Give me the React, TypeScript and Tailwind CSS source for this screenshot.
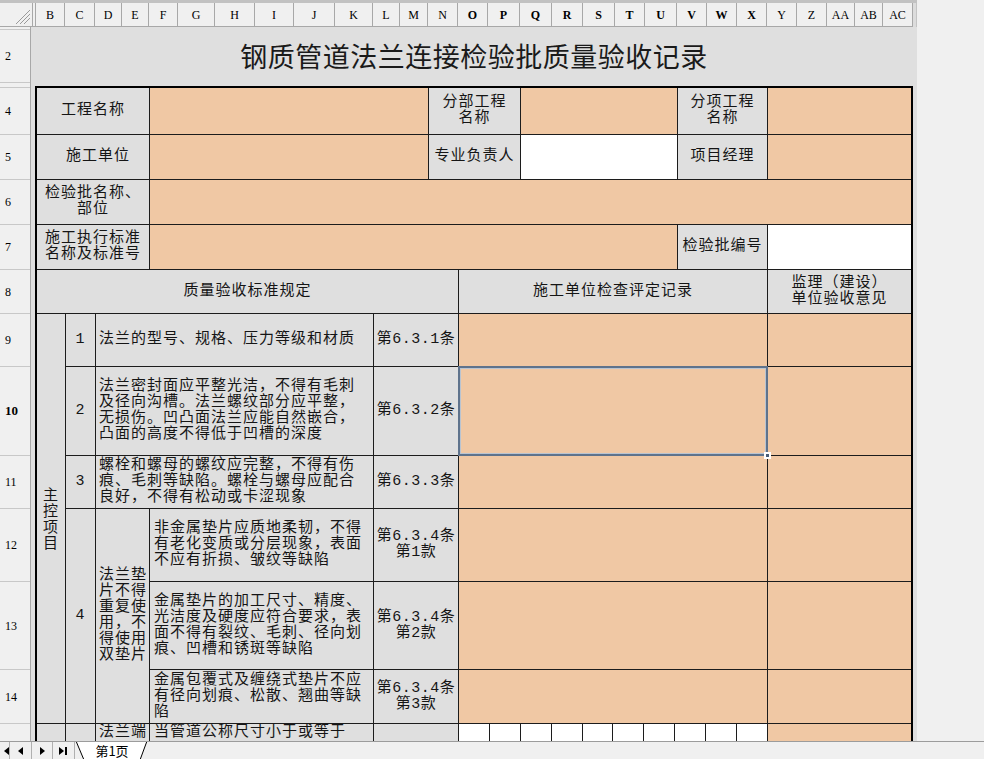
import React from 'react';

const colHeads: { name: string; w: string; weight: string }[] = [
  { name: 'B', w: 'w-[29px]', weight: 'font-normal' },
  { name: 'C', w: 'w-[30px]', weight: 'font-normal' },
  { name: 'D', w: 'w-[27px]', weight: 'font-normal' },
  { name: 'E', w: 'w-[27px]', weight: 'font-normal' },
  { name: 'F', w: 'w-[29px]', weight: 'font-normal' },
  { name: 'G', w: 'w-[37px]', weight: 'font-normal' },
  { name: 'H', w: 'w-[40px]', weight: 'font-normal' },
  { name: 'I', w: 'w-[39px]', weight: 'font-normal' },
  { name: 'J', w: 'w-[41px]', weight: 'font-normal' },
  { name: 'K', w: 'w-[38px]', weight: 'font-normal' },
  { name: 'L', w: 'w-[27px]', weight: 'font-normal' },
  { name: 'M', w: 'w-[28px]', weight: 'font-normal' },
  { name: 'N', w: 'w-[30px]', weight: 'font-normal' },
  { name: 'O', w: 'w-[30px]', weight: 'font-bold' },
  { name: 'P', w: 'w-[32px]', weight: 'font-bold' },
  { name: 'Q', w: 'w-[32px]', weight: 'font-bold' },
  { name: 'R', w: 'w-[31px]', weight: 'font-bold' },
  { name: 'S', w: 'w-[32px]', weight: 'font-bold' },
  { name: 'T', w: 'w-[30px]', weight: 'font-bold' },
  { name: 'U', w: 'w-[32px]', weight: 'font-bold' },
  { name: 'V', w: 'w-[30px]', weight: 'font-bold' },
  { name: 'W', w: 'w-[30px]', weight: 'font-bold' },
  { name: 'X', w: 'w-[30px]', weight: 'font-bold' },
  { name: 'Y', w: 'w-[30px]', weight: 'font-normal' },
  { name: 'Z', w: 'w-[30px]', weight: 'font-normal' },
  { name: 'AA', w: 'w-[28px]', weight: 'font-normal' },
  { name: 'AB', w: 'w-[28px]', weight: 'font-normal' },
  { name: 'AC', w: 'w-[30px]', weight: 'font-normal' },
];

const rowHeads: { n: string; h: string }[] = [
  { n: '', h: 'h-[3px]' },
  { n: '2', h: 'h-[53px]' },
  { n: '', h: 'h-[5px]' },
  { n: '4', h: 'h-[47px]' },
  { n: '5', h: 'h-[45px]' },
  { n: '6', h: 'h-[45px]' },
  { n: '7', h: 'h-[45px]' },
  { n: '8', h: 'h-[44px]' },
  { n: '9', h: 'h-[53px]' },
  { n: '10', h: 'h-[89px]' },
  { n: '11', h: 'h-[53px]' },
  { n: '12', h: 'h-[73px]' },
  { n: '13', h: 'h-[88px]' },
  { n: '14', h: 'h-[54px]' },
  { n: '', h: 'h-[46px]' },
];

const GRAY = 'bg-[#dfdfdf]';
const ORANGE = 'bg-[#f0c8a4]';
const WHITE = 'bg-white';

function Cell({ pos, bg = GRAY, left = false, top = false, children, extra = '' }: {
  pos: string;
  bg?: string;
  left?: boolean;
  top?: boolean;
  children?: React.ReactNode;
  extra?: string;
}) {
  return (
    <div
      className={`${pos} ${bg} flex overflow-hidden whitespace-pre ${top ? 'items-start pt-[1px]' : 'items-center'} ${
        left ? 'justify-start text-left pl-[3px]' : 'justify-center text-center'
      } ${extra}`}
    >
      {children}
    </div>
  );
}

function ColumnHeader() {
  return (
    <div className="flex h-[24px] shrink-0 bg-[#f0f0f0] font-['Liberation_Serif',serif] text-[12px] text-black">
      <div className="relative w-[33px] border-r border-b border-[#a8a8a8]">
        <svg className="absolute right-[2px] bottom-[2px]" width="14" height="14" viewBox="0 0 14 14">
          <line x1="14" y1="0" x2="0" y2="14" stroke="#9a9a9a" />
          <line x1="14" y1="4" x2="4" y2="14" stroke="#9a9a9a" />
          <line x1="14" y1="8" x2="8" y2="14" stroke="#9a9a9a" />
        </svg>
      </div>
      <div className="w-[3px] border-r border-b border-[#a8a8a8]" />
      {colHeads.map((c) => (
        <div key={c.name} className={`${c.w} ${c.weight} flex items-center justify-center border-r border-b border-[#a8a8a8]`}>
          {c.name}
        </div>
      ))}
      <div className="w-[4px] bg-[#dcdcdc] border-r border-[#c4c4c4]" />
    </div>
  );
}

function RowHeader() {
  return (
    <div className="w-[31px] shrink-0 bg-[#f0f0f0] border-r border-[#a8a8a8] font-['Liberation_Serif',serif] text-[12px] text-black">
      {rowHeads.map((r, i) => (
        <div
          key={i}
          className={`${r.h} flex items-center pl-[5px] border-b border-[#c8c8c8] ${r.n === '10' ? 'font-bold text-[13px]' : ''}`}
        >
          {r.n}
        </div>
      ))}
    </div>
  );
}

function Table() {
  return (
    <div className="w-[878px] border-2 border-black bg-[#1c1c1c] grid gap-px grid-cols-[28px_29px_53px_223px_54px_29px_61px_156px_89px_143px] grid-rows-[46px_44px_44px_44px_43px_52px_88px_52px_72px_87px_53px_46px] text-[15px] leading-[16px] tracking-[1px] text-[#151515]">
      {/* row 4 */}
      <Cell pos="col-start-1 col-end-4 row-start-1">工程名称</Cell>
      <Cell pos="col-start-4 col-end-6 row-start-1" bg={ORANGE} />
      <Cell pos="col-start-6 col-end-8 row-start-1">{'分部工程\n名称'}</Cell>
      <Cell pos="col-start-8 col-end-9 row-start-1" bg={ORANGE} />
      <Cell pos="col-start-9 col-end-10 row-start-1">{'分项工程\n名称'}</Cell>
      <Cell pos="col-start-10 col-end-11 row-start-1" bg={ORANGE} />

      {/* row 5 */}
      <Cell pos="col-start-1 col-end-4 row-start-2" extra="pl-[10px]">施工单位</Cell>
      <Cell pos="col-start-4 col-end-6 row-start-2" bg={ORANGE} />
      <Cell pos="col-start-6 col-end-8 row-start-2">专业负责人</Cell>
      <Cell pos="col-start-8 col-end-9 row-start-2" bg={WHITE} />
      <Cell pos="col-start-9 col-end-10 row-start-2">项目经理</Cell>
      <Cell pos="col-start-10 col-end-11 row-start-2" bg={ORANGE} />

      {/* row 6 */}
      <Cell pos="col-start-1 col-end-4 row-start-3">{'检验批名称、\n部位'}</Cell>
      <Cell pos="col-start-4 col-end-11 row-start-3" bg={ORANGE} />

      {/* row 7 */}
      <Cell pos="col-start-1 col-end-4 row-start-4">{'施工执行标准\n名称及标准号'}</Cell>
      <Cell pos="col-start-4 col-end-9 row-start-4" bg={ORANGE} />
      <Cell pos="col-start-9 col-end-10 row-start-4">检验批编号</Cell>
      <Cell pos="col-start-10 col-end-11 row-start-4" bg={WHITE} />

      {/* row 8 */}
      <Cell pos="col-start-1 col-end-7 row-start-5">质量验收标准规定</Cell>
      <Cell pos="col-start-7 col-end-10 row-start-5">施工单位检查评定记录</Cell>
      <Cell pos="col-start-10 col-end-11 row-start-5">{'监理（建设）\n单位验收意见'}</Cell>

      {/* 主控项目 */}
      <Cell pos="col-start-1 col-end-2 row-start-6 row-end-12" extra="pt-[4px]">{'主\n控\n项\n目'}</Cell>

      {/* row 9 */}
      <Cell pos="col-start-2 col-end-3 row-start-6">1</Cell>
      <Cell pos="col-start-3 col-end-5 row-start-6" left>法兰的型号、规格、压力等级和材质</Cell>
      <Cell pos="col-start-5 col-end-7 row-start-6" extra="tracking-[0.5px]">第6.3.1条</Cell>
      <Cell pos="col-start-7 col-end-10 row-start-6" bg={ORANGE} />
      <Cell pos="col-start-10 col-end-11 row-start-6" bg={ORANGE} />

      {/* row 10 */}
      <Cell pos="col-start-2 col-end-3 row-start-7">2</Cell>
      <Cell pos="col-start-3 col-end-5 row-start-7" left>
        {'法兰密封面应平整光洁，不得有毛刺\n及径向沟槽。法兰螺纹部分应平整，\n无损伤。凹凸面法兰应能自然嵌合，\n凸面的高度不得低于凹槽的深度'}
      </Cell>
      <Cell pos="col-start-5 col-end-7 row-start-7" extra="tracking-[0.5px]">第6.3.2条</Cell>
      <div className={`col-start-7 col-end-10 row-start-7 ${ORANGE} relative`}>
        <div className="absolute -inset-px border-2 border-[#5f738c]" />
        <div className="absolute inset-[1px] border border-[#b9c4d1]" />
        <div className="absolute -right-[4px] -bottom-[4px] w-[7px] h-[7px] bg-[#4a5d75] border-2 border-white" />
      </div>
      <Cell pos="col-start-10 col-end-11 row-start-7" bg={ORANGE} />

      {/* row 11 */}
      <Cell pos="col-start-2 col-end-3 row-start-8">3</Cell>
      <Cell pos="col-start-3 col-end-5 row-start-8" left>
        {'螺栓和螺母的螺纹应完整，不得有伤\n痕、毛刺等缺陷。螺栓与螺母应配合\n良好，不得有松动或卡涩现象'}
      </Cell>
      <Cell pos="col-start-5 col-end-7 row-start-8" extra="tracking-[0.5px]">第6.3.3条</Cell>
      <Cell pos="col-start-7 col-end-10 row-start-8" bg={ORANGE} />
      <Cell pos="col-start-10 col-end-11 row-start-8" bg={ORANGE} />

      {/* rows 12-14 */}
      <Cell pos="col-start-2 col-end-3 row-start-9 row-end-12">4</Cell>
      <Cell pos="col-start-3 col-end-4 row-start-9 row-end-12" left>
        {'法兰垫\n片不得\n重复使\n用，不\n得使用\n双垫片'}
      </Cell>

      <Cell pos="col-start-4 col-end-5 row-start-9" left extra="pl-[4px]">
        {'非金属垫片应质地柔韧，不得\n有老化变质或分层现象，表面\n不应有折损、皱纹等缺陷'}
      </Cell>
      <Cell pos="col-start-5 col-end-7 row-start-9" extra="tracking-[0.5px]">{'第6.3.4条\n第1款'}</Cell>
      <Cell pos="col-start-7 col-end-10 row-start-9" bg={ORANGE} />
      <Cell pos="col-start-10 col-end-11 row-start-9" bg={ORANGE} />

      <Cell pos="col-start-4 col-end-5 row-start-10" left extra="pl-[4px]">
        {'金属垫片的加工尺寸、精度、\n光洁度及硬度应符合要求，表\n面不得有裂纹、毛刺、径向划\n痕、凹槽和锈斑等缺陷'}
      </Cell>
      <Cell pos="col-start-5 col-end-7 row-start-10" extra="tracking-[0.5px]">{'第6.3.4条\n第2款'}</Cell>
      <Cell pos="col-start-7 col-end-10 row-start-10" bg={ORANGE} />
      <Cell pos="col-start-10 col-end-11 row-start-10" bg={ORANGE} />

      <Cell pos="col-start-4 col-end-5 row-start-11" left extra="pl-[4px]">
        {'金属包覆式及缠绕式垫片不应\n有径向划痕、松散、翘曲等缺\n陷'}
      </Cell>
      <Cell pos="col-start-5 col-end-7 row-start-11" extra="tracking-[0.5px]">{'第6.3.4条\n第3款'}</Cell>
      <Cell pos="col-start-7 col-end-10 row-start-11" bg={ORANGE} />
      <Cell pos="col-start-10 col-end-11 row-start-11" bg={ORANGE} />

      {/* row 15 */}
      <Cell pos="col-start-1 col-end-2 row-start-12" />
      <Cell pos="col-start-2 col-end-3 row-start-12" />
      <Cell pos="col-start-3 col-end-4 row-start-12" left top>法兰端</Cell>
      <Cell pos="col-start-4 col-end-5 row-start-12" left top extra="pl-[4px]">当管道公称尺寸小于或等于</Cell>
      <Cell pos="col-start-5 col-end-7 row-start-12" />
      <div className="col-start-7 col-end-10 row-start-12 grid grid-cols-10 gap-px bg-[#1c1c1c]">
        {Array.from({ length: 10 }).map((_, i) => (
          <div key={i} className="bg-white" />
        ))}
      </div>
      <Cell pos="col-start-10 col-end-11 row-start-12" bg={ORANGE} />
    </div>
  );
}

function Sheet() {
  return (
    <div className="w-[886px] shrink-0 bg-[#dfdfdf] pl-[4px]">
      <div className="h-[3px]" />
      <div className="h-[53px] w-[878px] flex items-center justify-center text-[27px] tracking-[0.5px] text-[#1a1a1a] font-['Noto_Sans_CJK_SC',sans-serif]">
        钢质管道法兰连接检验批质量验收记录
      </div>
      <div className="h-[3px]" />
      <Table />
    </div>
  );
}

function NavButton({ children, w }: { children: React.ReactNode; w: string }) {
  return <div className={`${w} h-full flex items-center justify-center border-r border-[#b0b0b0]`}>{children}</div>;
}

function TabBar() {
  return (
    <div className="h-[18px] shrink-0 flex bg-[#f0f0f0] border-t border-[#9c9c9c] overflow-hidden">
      <div className="w-[10px] h-full flex items-center justify-end border-r border-[#b0b0b0] overflow-hidden">
        <svg width="6" height="8" viewBox="0 0 6 8"><polygon points="6,0 6,8 1,4" fill="#000" /></svg>
      </div>
      <NavButton w="w-[22px]">
        <svg width="6" height="8" viewBox="0 0 6 8"><polygon points="5,0 5,8 0,4" fill="#000" /></svg>
      </NavButton>
      <NavButton w="w-[21px]">
        <svg width="6" height="8" viewBox="0 0 6 8"><polygon points="1,0 1,8 6,4" fill="#000" /></svg>
      </NavButton>
      <NavButton w="w-[22px]">
        <svg width="9" height="8" viewBox="0 0 9 8">
          <polygon points="0,0 0,8 5,4" fill="#000" />
          <rect x="6" y="0" width="2" height="8" fill="#000" />
        </svg>
      </NavButton>
      <div className="relative w-[74px] h-full flex items-end justify-center -mt-px">
        <svg className="absolute inset-0" width="74" height="19" viewBox="0 0 74 19">
          <polygon points="1,0 72,0 65,19 9,19" fill="#ffffff" />
          <line x1="1" y1="0" x2="9" y2="19" stroke="#000" />
          <line x1="72" y1="0" x2="65" y2="19" stroke="#000" />
        </svg>
        <span className="relative text-[13px] leading-[15px] text-black font-['Noto_Sans_CJK_SC',sans-serif]">第1页</span>
      </div>
    </div>
  );
}

export default function App() {
  return (
    <div className="w-[984px] h-[759px] overflow-hidden flex flex-col bg-[#f0f0f0] font-['Liberation_Mono','Noto_Sans_CJK_SC',monospace] text-[#111]">
      <div className="h-[3px] w-[917px] shrink-0 bg-[#c2c2c2]" />
      <ColumnHeader />
      <div className="flex flex-1 min-h-0 overflow-hidden">
        <RowHeader />
        <Sheet />
        <div className="flex-1 bg-[#f0f0f0]" />
      </div>
      <TabBar />
    </div>
  );
}
